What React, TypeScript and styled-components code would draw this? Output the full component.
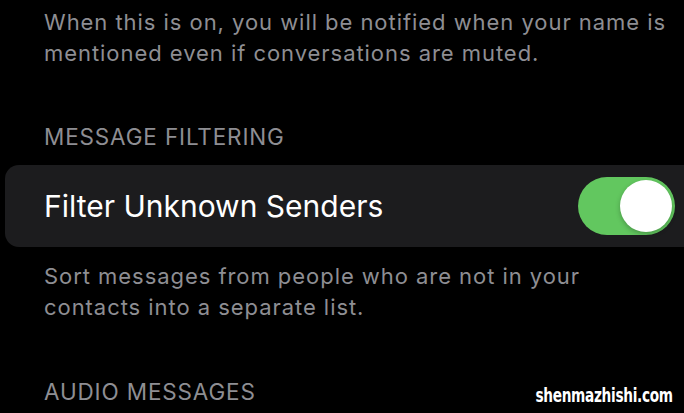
import React from "react";
import styled, { createGlobalStyle } from "styled-components";

const GlobalStyle = createGlobalStyle`
  html, body {
    margin: 0;
    padding: 0;
    background: #000;
    overflow: hidden;
  }
  body {
    font-family: Inter, "Liberation Sans", sans-serif;
    -webkit-font-smoothing: antialiased;
  }
`;

const Page = styled.div`
  position: relative;
  width: 684px;
  height: 413px;
  background: #000;
  overflow: hidden;
  display: flex;
  flex-direction: column;
`;

const Footer = styled.p<{ top: number }>`
  margin: ${({ top }) => top}px 0 0 44px;
  color: #8e8e93;
  font-size: 22px;
  line-height: 30.5px;
  letter-spacing: 0.95px;
  white-space: nowrap;
`;

const Header = styled.h3<{ top: number }>`
  margin: ${({ top }) => top}px 0 0 44px;
  color: #8e8e93;
  font-weight: 400;
  font-size: 22.5px;
  line-height: 27px;
  letter-spacing: 0.85px;
  text-transform: uppercase;
`;

const Row = styled.div`
  margin: 15px -40px 0 5px;
  height: 82px;
  background: #1c1c1e;
  border-radius: 14px;
  display: flex;
  align-items: center;
  justify-content: space-between;
  padding: 0 49px 0 39px;
`;

const Label = styled.span`
  color: #fff;
  font-size: 30px;
`;

const Track = styled.div<{ on: boolean }>`
  width: 97px;
  height: 58px;
  border-radius: 29px;
  background: ${({ on }) => (on ? "#62c75f" : "#39393d")};
  display: flex;
  align-items: center;
  justify-content: ${({ on }) => (on ? "flex-end" : "flex-start")};
  padding: 0 3px;
  box-sizing: border-box;
`;

const Knob = styled.div`
  width: 52px;
  height: 52px;
  border-radius: 50%;
  background: #fff;
  box-shadow: 0 2px 5px rgba(0, 0, 0, 0.25);
`;

const Watermark = styled.span`
  position: absolute;
  right: 11px;
  bottom: 6px;
  color: #fff;
  font-family: "DejaVu Sans Condensed", "Liberation Sans", sans-serif;
  font-weight: 700;
  font-size: 20px;
  letter-spacing: -0.4px;
  transform: scaleX(0.76);
  transform-origin: right center;
`;

export default function App() {
  return (
    <Page>
      <GlobalStyle />
      <Footer top={7}>
        When this is on, you will be notified when your name is
        <br />
        mentioned even if conversations are muted.
      </Footer>
      <Header top={55}>Message Filtering</Header>
      <Row>
        <Label>Filter Unknown Senders</Label>
        <Track on>
          <Knob />
        </Track>
      </Row>
      <Footer top={14}>
        Sort messages from people who are not in your
        <br />
        contacts into a separate list.
      </Footer>
      <Header top={56}>Audio Messages</Header>
      <Watermark>shenmazhishi.com</Watermark>
    </Page>
  );
}
